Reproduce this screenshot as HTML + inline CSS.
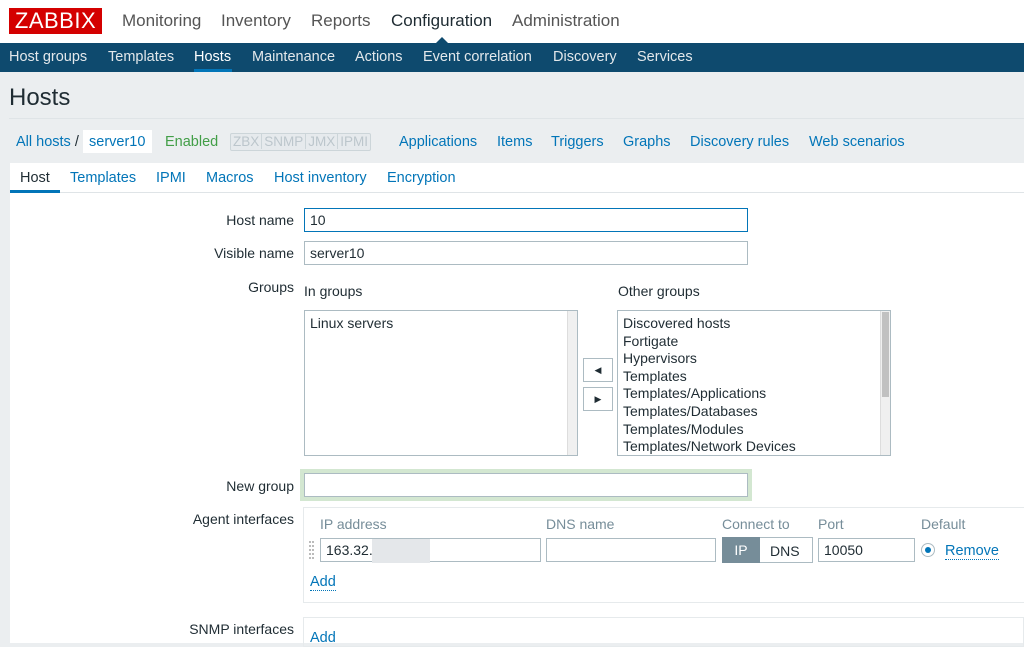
<!DOCTYPE html>
<html><head><meta charset="utf-8"><style>
*{box-sizing:border-box;margin:0;padding:0}
body{width:1024px;height:636px;overflow:hidden;background:#ebeef0;font-family:"Liberation Sans",Arial,sans-serif;font-size:14.5px;color:#1f2c33;position:relative}
.a{position:absolute;white-space:nowrap}
a{color:#0275b8;text-decoration:none}
.inp{position:absolute;background:#fff;border:1px solid #acbbc2;height:24px;padding:2px 5px;font-size:14px;line-height:18px}
.lbl{position:absolute;right:730px;font-size:14px;color:#1f2c33}
.list{position:absolute;background:#fff;border:1px solid #acbbc2;padding:4px 5px;line-height:17.6px;font-size:14px}
.sb{position:absolute;right:0;top:0;bottom:0;width:10px;background:#f0f0f0;border-left:1px solid #ddd}
.btn{position:absolute;width:30px;height:24px;background:#fff;border:1px solid #acbbc2;font-size:9px;text-align:center;line-height:22px}
</style></head><body>
<div class="a" style="left:0;top:0;width:1024px;height:43px;background:#fff"></div>
<div class="a" style="left:9px;top:8px;width:93px;height:26px;background:#d40000;color:#fff;font-size:22px;line-height:26px;text-align:center;letter-spacing:0.5px">ZABBIX</div>
<div class="a" style="left:122px;top:11px;font-size:17px;color:#555">Monitoring</div>
<div class="a" style="left:221px;top:11px;font-size:17px;color:#555">Inventory</div>
<div class="a" style="left:311px;top:11px;font-size:17px;color:#555">Reports</div>
<div class="a" style="left:391px;top:11px;font-size:17px;color:#1f2c33">Configuration</div>
<div class="a" style="left:512px;top:11px;font-size:17px;color:#555">Administration</div>
<div class="a" style="left:0;top:43px;width:1024px;height:29px;background:#0e4a6e"></div>
<div class="a" style="left:435px;top:37px;width:0;height:0;border-left:7px solid transparent;border-right:7px solid transparent;border-bottom:7px solid #0e4a6e"></div>
<div class="a" style="top:49px;left:0;font-size:14.5px;color:#e3e8eb">
<span style="position:absolute;left:9px">Host&nbsp;groups</span>
<span style="position:absolute;left:108px">Templates</span>
<span style="position:absolute;left:194px;color:#fff">Hosts</span>
<span style="position:absolute;left:252px">Maintenance</span>
<span style="position:absolute;left:355px">Actions</span>
<span style="position:absolute;left:423px">Event&nbsp;correlation</span>
<span style="position:absolute;left:553px">Discovery</span>
<span style="position:absolute;left:637px">Services</span></div>
<div class="a" style="left:194px;top:69px;width:38px;height:3px;background:#0275b8"></div>
<div class="a" style="left:9px;top:84px;font-size:24px;color:#1f2c33">Hosts</div>
<div class="a" style="left:9px;top:118px;width:1015px;height:1px;background:#dfe4e7"></div>
<div class="a" style="left:16px;top:134px"><a>All hosts</a> <span style="color:#1f2c33">/</span></div>
<div class="a" style="left:83px;top:130px;width:69px;height:23px;background:#fff"></div>
<div class="a" style="left:89px;top:134px"><a>server10</a></div>
<div class="a" style="left:165px;top:134px;color:#429e47">Enabled</div>
<div class="a" style="left:230px;top:133px;height:18px;border:1px solid #ccd5d9;border-radius:2px;font-size:13.5px;color:#bcc6cc;line-height:16px;background:#e6eaed"><span style="padding:0 2px;border-right:1px solid #ccd5d9">ZBX</span><span style="padding:0 2px;border-right:1px solid #ccd5d9">SNMP</span><span style="padding:0 2px;border-right:1px solid #ccd5d9">JMX</span><span style="padding:0 2px">IPMI</span></div>
<div class="a" style="left:399px;top:134px"><a>Applications</a></div>
<div class="a" style="left:497px;top:134px"><a>Items</a></div>
<div class="a" style="left:551px;top:134px"><a>Triggers</a></div>
<div class="a" style="left:623px;top:134px"><a>Graphs</a></div>
<div class="a" style="left:690px;top:134px"><a>Discovery rules</a></div>
<div class="a" style="left:809px;top:134px"><a>Web scenarios</a></div>
<div class="a" style="left:10px;top:163px;width:1014px;height:480px;background:#fff"></div>
<div class="a" style="left:10px;top:192px;width:1014px;height:1px;background:#dfe4e7"></div>
<div class="a" style="left:10px;top:190px;width:50px;height:3px;background:#0275b8"></div>
<div class="a" style="left:20px;top:170px">Host</div>
<div class="a" style="left:70px;top:170px"><a>Templates</a></div>
<div class="a" style="left:156px;top:170px"><a>IPMI</a></div>
<div class="a" style="left:206px;top:170px"><a>Macros</a></div>
<div class="a" style="left:274px;top:170px"><a>Host inventory</a></div>
<div class="a" style="left:387px;top:170px"><a>Encryption</a></div>
<div class="lbl" style="top:212px">Host name</div>
<div class="inp" style="left:304px;top:208px;width:444px;border-color:#0275b8">10</div>
<div class="lbl" style="top:245px">Visible name</div>
<div class="inp" style="left:304px;top:241px;width:444px">server10</div>
<div class="lbl" style="top:279px">Groups</div>
<div class="a" style="left:304px;top:283px;font-size:14px">In groups</div>
<div class="a" style="left:618px;top:283px;font-size:14px">Other groups</div>
<div class="list" style="left:304px;top:310px;width:274px;height:146px">Linux servers<div class="sb"></div></div>
<div class="list" style="left:617px;top:310px;width:274px;height:146px;overflow:hidden">Discovered hosts<br>Fortigate<br>Hypervisors<br>Templates<br>Templates/Applications<br>Templates/Databases<br>Templates/Modules<br>Templates/Network Devices<div class="sb"><div style="margin:1px;height:85px;background:#c1c1c1"></div></div></div>
<div class="btn" style="left:583px;top:358px">◀</div>
<div class="btn" style="left:583px;top:387px">▶</div>
<div class="lbl" style="top:478px">New group</div>
<div class="a" style="left:300px;top:469px;width:452px;height:32px;background:#d3e7d1"></div>
<div class="inp" style="left:304px;top:473px;width:444px"></div>
<div class="lbl" style="top:511px">Agent interfaces</div>
<div class="a" style="left:303px;top:507px;width:721px;height:96px;border:1px solid #e6eaec;border-right:none"></div>
<div class="a" style="left:320px;top:516px;color:#768d99;font-size:14px">IP address</div>
<div class="a" style="left:546px;top:516px;color:#768d99;font-size:14px">DNS name</div>
<div class="a" style="left:722px;top:516px;color:#768d99;font-size:14px">Connect to</div>
<div class="a" style="left:818px;top:516px;color:#768d99;font-size:14px">Port</div>
<div class="a" style="left:921px;top:516px;color:#768d99;font-size:14px">Default</div>
<div class="a" style="left:309px;top:541px;width:5px;height:18px;border-left:2px dotted #bbb;border-right:2px dotted #bbb"></div>
<div class="inp" style="left:320px;top:538px;width:221px">163.32.</div>
<div class="a" style="left:372px;top:539px;width:58px;height:24px;background:#e4e7ea"></div>
<div class="inp" style="left:546px;top:538px;width:170px"></div>
<div class="a" style="left:722px;top:537px;width:91px;height:26px;border:1px solid #acbbc2;background:#fff"></div>
<div class="a" style="left:722px;top:537px;width:38px;height:26px;background:#768d99;color:#fff;text-align:center;line-height:26px;font-size:14px">IP</div>
<div class="a" style="left:770px;top:543px;font-size:14px">DNS</div>
<div class="inp" style="left:818px;top:538px;width:97px">10050</div>
<div class="a" style="left:921px;top:543px;width:14px;height:14px;border:1px solid #acbbc2;border-radius:50%"><div style="margin:3px;width:6px;height:6px;border-radius:50%;background:#0275b8"></div></div>
<div class="a" style="left:945px;top:543px;border-bottom:1px dotted #0275b8"><a>Remove</a></div>
<div class="a" style="left:310px;top:574px;border-bottom:1px dotted #0275b8"><a>Add</a></div>
<div class="lbl" style="top:621px">SNMP interfaces</div>
<div class="a" style="left:303px;top:617px;width:721px;height:30px;border:1px solid #e6eaec"></div>
<div class="a" style="left:310px;top:630px"><a>Add</a></div>
</body></html>
